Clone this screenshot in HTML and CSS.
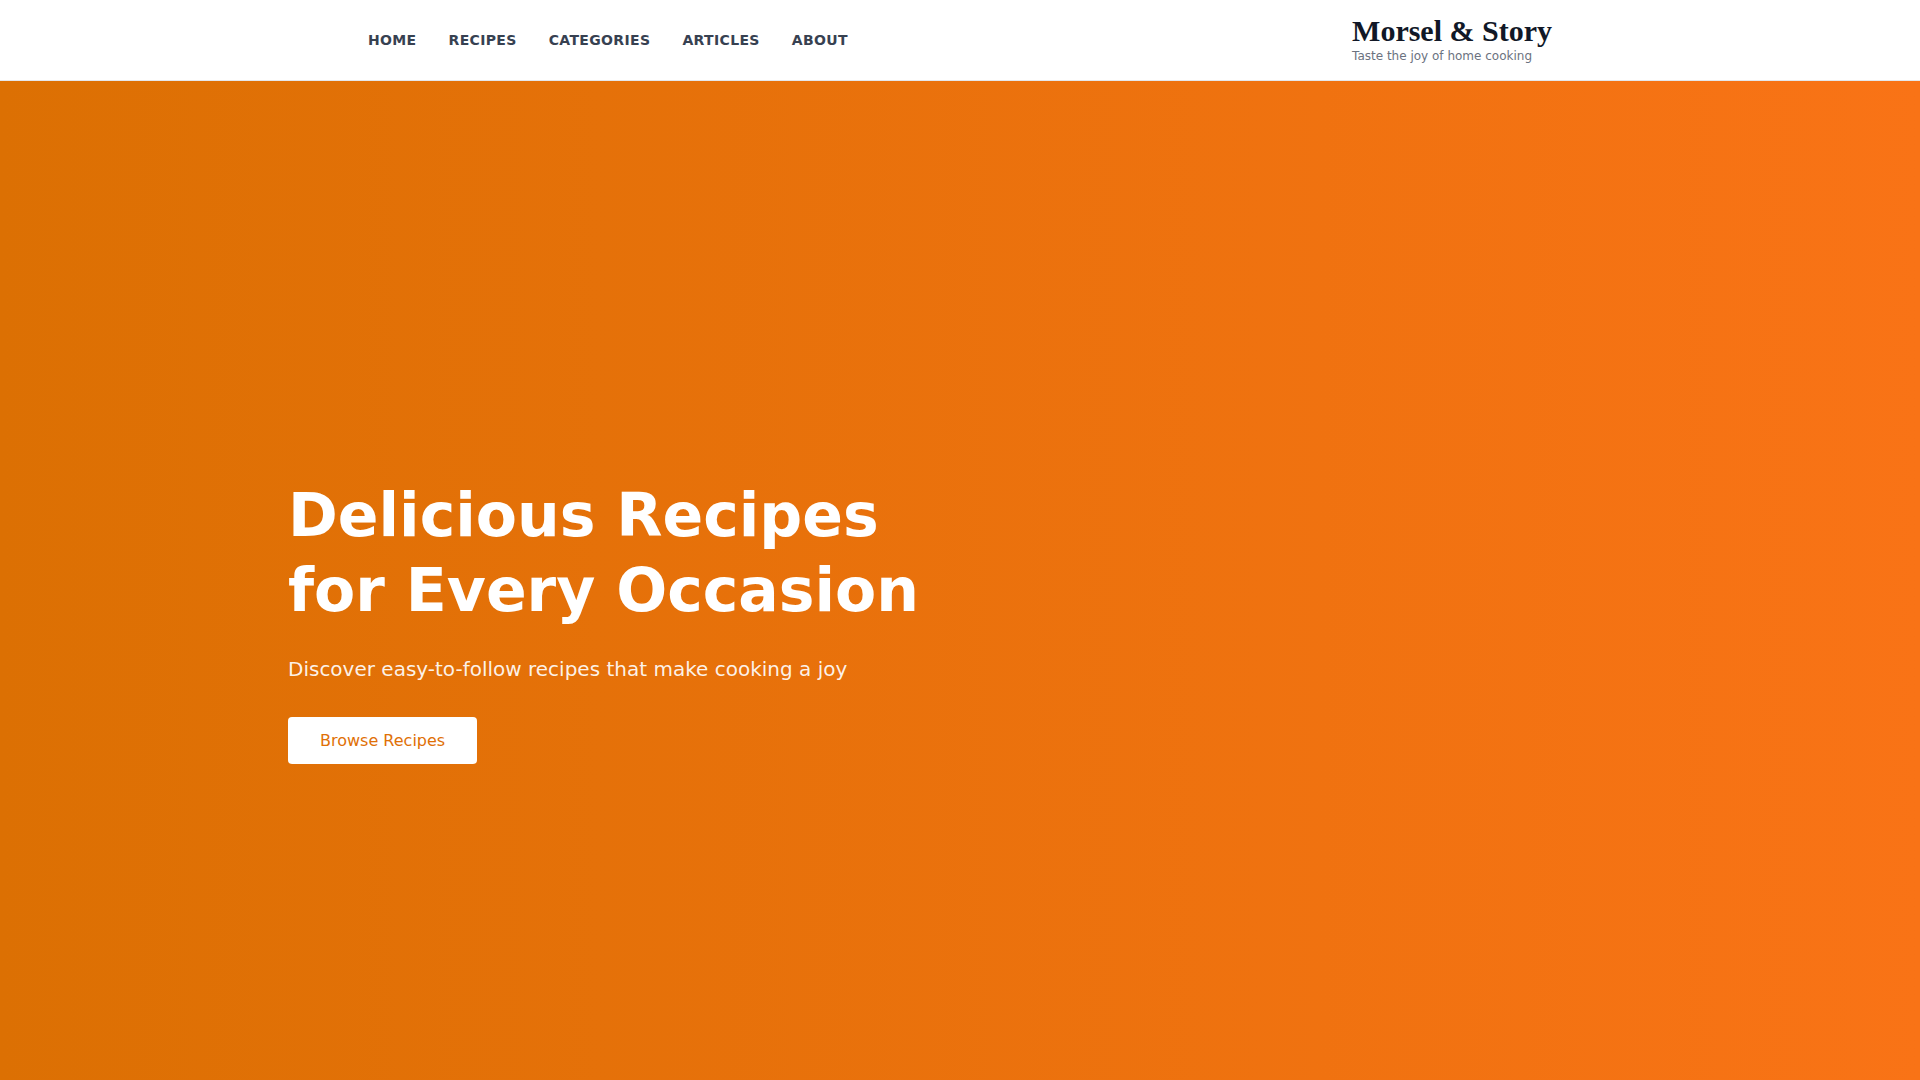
FILE: index.html
```html
<!DOCTYPE html>
<html lang="en">
<head>
<meta charset="utf-8">
<title>Morsel &amp; Story</title>
<link rel="stylesheet" href="styles.css">
</head>
<body>
<header class="site-header">
  <div class="header-inner">
    <nav class="main-nav">
      <a href="#" class="nav-link">Home</a>
      <a href="#" class="nav-link">Recipes</a>
      <a href="#" class="nav-link">Categories</a>
      <a href="#" class="nav-link">Articles</a>
      <a href="#" class="nav-link">About</a>
    </nav>
    <div class="brand">
      <div class="brand-title">Morsel &amp; Story</div>
      <div class="brand-tagline">Taste the joy of home cooking</div>
    </div>
  </div>
</header>
<section class="hero">
  <div class="hero-inner">
    <h1 class="hero-title">Delicious Recipes<br>for Every Occasion</h1>
    <p class="hero-subtitle">Discover easy-to-follow recipes that make cooking a joy</p>
    <a href="#" class="hero-button">Browse Recipes</a>
  </div>
</section>
</body>
</html>
```

FILE: styles.css
```css
* { box-sizing: border-box; }
html, body { margin: 0; padding: 0; }
body {
  font-family: "DejaVu Sans", "Liberation Sans", sans-serif;
  background: #ffffff;
}
a { text-decoration: none; }

.site-header {
  background: #ffffff;
  border-bottom: 1px solid #e5e7eb;
}
.header-inner {
  max-width: 1280px;
  margin: 0 auto;
  padding: 0 48px;
  height: 80px;
  display: flex;
  align-items: center;
  justify-content: space-between;
}
.main-nav {
  display: flex;
  gap: 32px;
}
.nav-link {
  font-size: 14px;
  font-weight: 700;
  letter-spacing: 0.025em;
  text-transform: uppercase;
  color: #374151;
  line-height: 20px;
}
.brand {
  display: flex;
  flex-direction: column;
  padding-bottom: 3px;
}
.brand-title {
  font-family: "Liberation Serif", "Times New Roman", serif;
  font-weight: 700;
  font-size: 30px;
  line-height: 33px;
  margin-bottom: 1px;
  color: #111827;
}
.brand-tagline {
  font-size: 12px;
  line-height: 16px;
  color: #6b7280;
}

.hero {
  min-height: 1080px;
  display: flex;
  align-items: center;
  background: linear-gradient(to right, #dc7003, #f97316);
  color: #ffffff;
}
.hero-inner {
  width: 100%;
  max-width: 1344px;
  margin: 0 auto;
}
.hero-title {
  margin: 0 0 27px;
  font-size: 60px;
  line-height: 75px;
  font-weight: 700;
  color: #ffffff;
}
.hero-subtitle {
  margin: 0 0 34px;
  font-size: 20px;
  line-height: 28px;
  color: rgba(255, 255, 255, 0.92);
}
.hero-button {
  display: inline-block;
  background: #ffffff;
  color: #e07006;
  font-size: 16px;
  line-height: 23px;
  padding: 12px 32px;
  border-radius: 4px;
}
```
